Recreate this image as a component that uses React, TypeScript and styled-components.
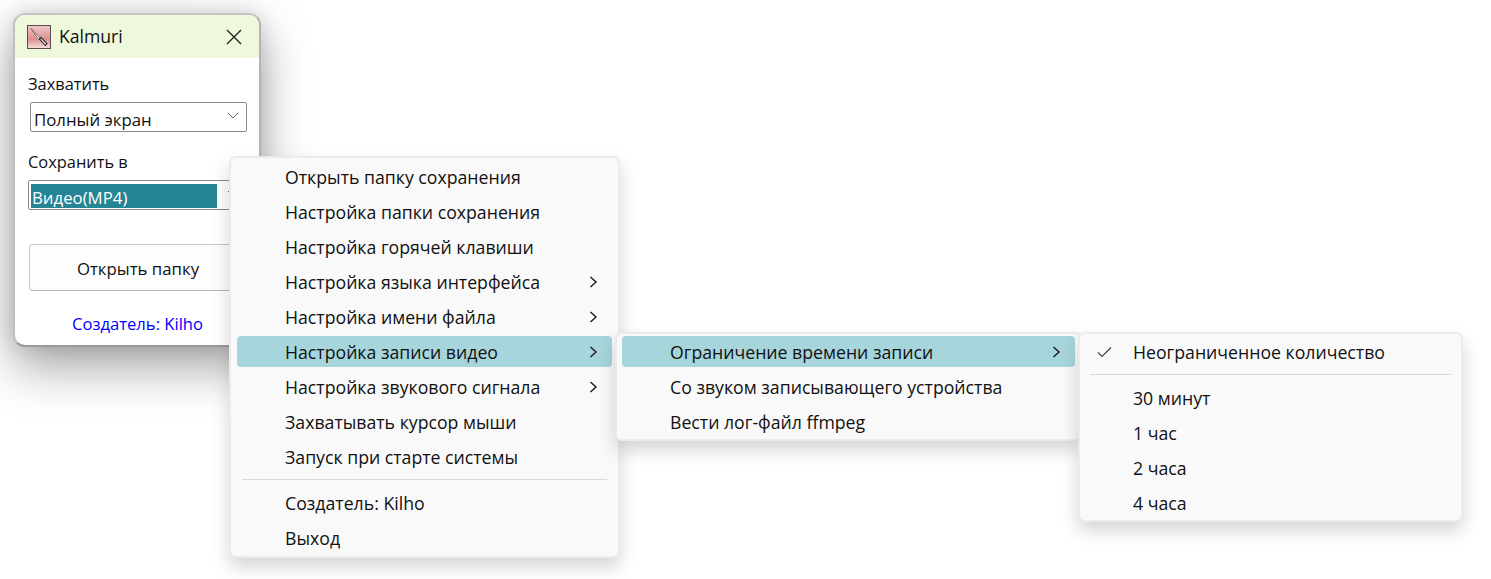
import { createGlobalStyle, styled } from "styled-components";

const GlobalStyle = createGlobalStyle`
  html, body {
    margin: 0;
    background: #fff;
  }
  body {
    font-family: "Open Sans", "Noto Sans", sans-serif;
    color: #111;
  }
`;

const Desktop = styled.div`
  position: relative;
  width: 1491px;
  height: 579px;
  overflow: hidden;
  background: #fff;
`;

const Window = styled.div`
  position: absolute;
  left: 13px;
  top: 13px;
  width: 248px;
  height: 334px;
  box-sizing: border-box;
  background: #fff;
  border: 2px solid;
  border-color: #c4c4c4 #b4b4b4 #9a9a9a #c0c0c0;
  border-radius: 12px;
  box-shadow: 0 20px 50px rgba(0, 0, 0, 0.36), 0 0 20px rgba(0, 0, 0, 0.12);
  overflow: hidden;
  display: flex;
  flex-direction: column;
`;

const TitleBar = styled.div`
  height: 43px;
  flex: none;
  display: flex;
  align-items: center;
  padding: 0 17px 0 12px;
  background: #eef8dc;
  font-size: 17.6px;
`;

const TitleText = styled.span`
  margin: 0 0 1px 8px;
  flex: 1;
`;

const Body = styled.div`
  flex: 1;
  display: flex;
  flex-direction: column;
  padding: 0 12px 0 13px;
`;

const FieldLabel = styled.div<{ $top: number }>`
  margin-top: ${(p) => p.$top}px;
  height: 24px;
  line-height: 24px;
  font-size: 16.4px;
`;

const Combo = styled.div<{ $left: number; $top: number }>`
  margin: ${(p) => p.$top}px 0 0 ${(p) => p.$left}px;
  height: 30px;
  box-sizing: border-box;
  border: 1px solid #8a8a8a;
  border-radius: 2px;
  display: flex;
  align-items: center;
  position: relative;
  font-size: 16.8px;
  background: #fff;
`;

const ComboText = styled.span`
  padding: 5px 0 0 3px;
`;

const ComboSelected = styled.span`
  margin: 2px 0 0 2px;
  width: 186px;
  height: 24px;
  line-height: 27px;
  padding-left: 1px;
  box-sizing: border-box;
  background: #268595;
  color: #fff;
  font-size: 16.8px;
`;

const ComboArrow = styled.svg`
  position: absolute;
  right: 7px;
  top: 9px;
`;

const OpenButton = styled.div`
  margin: 34px 0 0 1px;
  height: 47px;
  padding-top: 1px;
  box-sizing: border-box;
  border: 1px solid #c6c6c6;
  border-bottom-color: #b4b4b4;
  border-radius: 4px;
  background: #fdfdfd;
  display: flex;
  align-items: center;
  justify-content: center;
  font-size: 16.8px;
`;

const CreatorLink = styled.div`
  margin-top: 22px;
  text-align: center;
  font-size: 16.6px;
  line-height: 22px;
  color: #0000ff;
`;

const Menu = styled.div<{ $left: number; $top: number; $width: number; $height: number; $pad: string }>`
  position: absolute;
  left: ${(p) => p.$left}px;
  top: ${(p) => p.$top}px;
  width: ${(p) => p.$width}px;
  height: ${(p) => p.$height}px;
  box-sizing: border-box;
  padding: ${(p) => p.$pad};
  display: flex;
  flex-direction: column;
  background: #f9f9f9;
  border: 2px solid #ebebeb;
  border-radius: 7px;
  box-shadow: 0 9px 18px rgba(0, 0, 0, 0.17);
`;

const Row = styled.div<{ $active?: boolean }>`
  position: relative;
  flex: none;
  height: 31px;
  margin: 2px 0;
  border-radius: 4px;
  display: flex;
  align-items: center;
  padding-left: 48px;
  box-sizing: border-box;
  font-size: 17.7px;
  white-space: nowrap;
  background: ${(p) => (p.$active ? "#a7d5dc" : "transparent")};
`;

const Separator = styled.div`
  flex: none;
  height: 1px;
  margin: 5px 5px;
  background: #d9d9d9;
`;

const Chevron = styled.svg`
  position: absolute;
  right: 14px;
  top: 10px;
`;

const Check = styled.svg`
  position: absolute;
  left: 12px;
  top: 10px;
`;

function AppIcon() {
  return (
    <svg width="24" height="24" viewBox="0 0 24 24">
      <defs>
        <linearGradient id="iconBg" x1="0" y1="0" x2="0" y2="1">
          <stop offset="0" stopColor="#f0c8c8" />
          <stop offset="0.6" stopColor="#dc8f90" />
          <stop offset="1" stopColor="#f6e2e2" />
        </linearGradient>
      </defs>
      <rect x="0.5" y="0.5" width="23" height="23" fill="url(#iconBg)" stroke="#5d4a4a" />
      <path d="M4 3.5 L13 13 L11.5 14.5 Z" fill="#fff" stroke="#6b5555" strokeWidth="0.8" />
      <path d="M12.5 14 L14 12.5 L20 18.5 L18.5 20.5 Z" fill="#f5f5f5" stroke="#222" strokeWidth="1.1" />
    </svg>
  );
}

function SubArrow() {
  return (
    <Chevron width="9" height="12" viewBox="0 0 9 12">
      <polyline points="1.5,1 7,6 1.5,11" fill="none" stroke="#222" strokeWidth="1.5" />
    </Chevron>
  );
}

function ComboChevron() {
  return (
    <ComboArrow width="12" height="8" viewBox="0 0 12 8">
      <polyline points="1,1 6,6 11,1" fill="none" stroke="#666" strokeWidth="1" />
    </ComboArrow>
  );
}

export default function App() {
  return (
    <Desktop>
      <GlobalStyle />
      <Window>
        <TitleBar>
          <AppIcon />
          <TitleText>Kalmuri</TitleText>
          <svg width="16" height="16" viewBox="0 0 16 16">
            <path d="M1 1 L15 15 M15 1 L1 15" stroke="#222" strokeWidth="1.4" fill="none" />
          </svg>
        </TitleBar>
        <Body>
          <FieldLabel $top={14}>Захватить</FieldLabel>
          <Combo $left={2} $top={6}>
            <ComboText>Полный экран</ComboText>
            <ComboChevron />
          </Combo>
          <FieldLabel $top={18}>Сохранить в</FieldLabel>
          <Combo $left={0} $top={6}>
            <ComboSelected>Видео(MP4)</ComboSelected>
            <ComboChevron />
          </Combo>
          <OpenButton>Открыть папку</OpenButton>
          <CreatorLink>Создатель: Kilho</CreatorLink>
        </Body>
      </Window>

      <Menu $left={229} $top={156} $width={391} $height={402} $pad="1px 6px">
        <Row>Открыть папку сохранения</Row>
        <Row>Настройка папки сохранения</Row>
        <Row>Настройка горячей клавиши</Row>
        <Row>Настройка языка интерфейса<SubArrow /></Row>
        <Row>Настройка имени файла<SubArrow /></Row>
        <Row $active>Настройка записи видео<SubArrow /></Row>
        <Row>Настройка звукового сигнала<SubArrow /></Row>
        <Row>Захватывать курсор мыши</Row>
        <Row>Запуск при старте системы</Row>
        <Separator />
        <Row>Создатель: Kilho</Row>
        <Row>Выход</Row>
      </Menu>

      <Menu $left={615} $top={332} $width={467} $height={109} $pad="0 5px">
        <Row $active>Ограничение времени записи<SubArrow /></Row>
        <Row>Со звуком записывающего устройства</Row>
        <Row>Вести лог-файл ffmpeg</Row>
      </Menu>

      <Menu $left={1078} $top={332} $width={385} $height={190} $pad="0 5px">
        <Row>
          <Check width="15" height="12" viewBox="0 0 15 12">
            <polyline points="1,6.5 5,10.5 14,1.5" fill="none" stroke="#444" strokeWidth="1.2" />
          </Check>
          Неограниченное количество
        </Row>
        <Separator />
        <Row>30 минут</Row>
        <Row>1 час</Row>
        <Row>2 часа</Row>
        <Row>4 часа</Row>
      </Menu>
    </Desktop>
  );
}
